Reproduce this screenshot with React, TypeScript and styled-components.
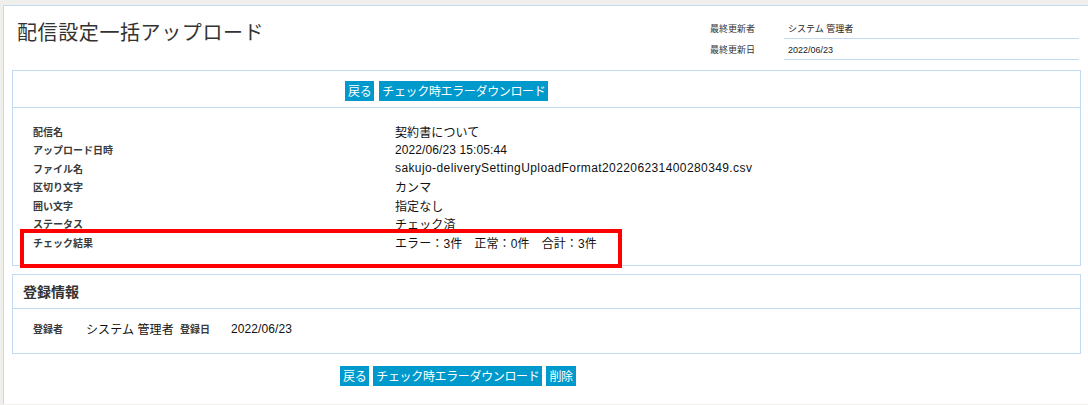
import React from "react";
import styled, { createGlobalStyle } from "styled-components";

const GlobalStyle = createGlobalStyle`
  html, body {
    margin: 0;
    padding: 0;
    background: #f0efec;
  }
  body {
    font-family: "Noto Sans CJK JP", "Liberation Sans", sans-serif;
    color: #333;
  }
`;

const BORDER = "#c3dbf2";

const Page = styled.div`
  margin: 5px 0 0 3px;
  background: #ffffff;
  border-top: 1px solid ${BORDER};
  border-left: 1px solid ${BORDER};
  min-height: 399px;
  box-sizing: border-box;
`;

const TopBar = styled.div`
  display: flex;
  justify-content: space-between;
  align-items: flex-start;
  height: 64px;
  padding: 0 9px 0 13px;
`;

const Title = styled.h1`
  margin: 11px 0 0;
  font-size: 20px;
  line-height: 30px;
  font-weight: 400;
  color: #333;
  letter-spacing: 0.6px;
`;

const Meta = styled.div`
  display: grid;
  grid-template-columns: 74px 295px;
  grid-auto-rows: 21px;
  margin-top: 12px;
`;

const MetaLabel = styled.div`
  display: flex;
  align-items: center;
  font-size: 9px;
  line-height: 12px;
  color: #333;
`;

const MetaValue = styled.div`
  display: flex;
  align-items: flex-end;
  padding: 0 0 3px 4px;
  border-bottom: 1px solid ${BORDER};
  font-family: "Liberation Sans", "Noto Sans CJK JP", sans-serif;
  font-size: 9px;
  line-height: 12px;
  color: #222;
`;

const Panel = styled.section<{ $top?: number }>`
  margin: ${(p) => p.$top ?? 0}px 7px 0 8px;
  border: 1px solid ${BORDER};
  background: #fff;
`;

const PanelHeader = styled.div<{ $h: number }>`
  height: ${(p) => p.$h}px;
  border-bottom: 1px solid ${BORDER};
  box-sizing: border-box;
`;

const ButtonRow = styled.div<{ $pad: number; $gap: number; $top: number }>`
  display: flex;
  gap: ${(p) => p.$gap}px;
  padding: ${(p) => p.$top}px 0 0 ${(p) => p.$pad}px;
`;

const Button = styled.button`
  height: 20px;
  padding: 0 3px;
  border: none;
  border-radius: 0;
  background: #0099cc;
  color: #ffffff;
  font-family: "Noto Sans CJK JP", sans-serif;
  font-size: 12px;
  line-height: 20px;
  letter-spacing: -0.35px;
  cursor: pointer;
`;

const Body = styled.div`
  position: relative;
  padding: 14px 0 13px 20px;
`;

const InfoGrid = styled.div`
  display: grid;
  grid-template-columns: 362px 1fr;
  grid-auto-rows: 18.5px;
  align-items: center;
`;

const Label = styled.div<{ $w?: number }>`
  font-size: 10px;
  font-weight: 700;
  color: #3a3a3a;
  ${(p) => (p.$w ? `width: ${p.$w}px; flex: none;` : "")}
`;

const Value = styled.div<{ $w?: number; $spread?: boolean }>`
  font-family: "Liberation Sans", "Noto Sans CJK JP", sans-serif;
  font-size: 12px;
  color: #111;
  white-space: nowrap;
  letter-spacing: ${(p) => (p.$spread ? "0.4px" : "0.1px")};
  ${(p) => (p.$w ? `width: ${p.$w}px; flex: none;` : "")}
`;

const Highlight = styled.div`
  position: absolute;
  left: 7px;
  top: 121px;
  width: 602px;
  height: 39px;
  border: 4px solid #ff0000;
  box-sizing: border-box;
  pointer-events: none;
`;

const SectionTitle = styled.h2`
  margin: 0;
  padding-left: 10px;
  font-size: 14px;
  font-weight: 700;
  line-height: 33px;
  color: #333;
`;

const RegRow = styled.div`
  display: flex;
  align-items: center;
  height: 20px;
  padding: 10px 0 14px 20px;
`;

const Footer = styled.div`
  padding-top: 12px;
`;

const rows: { label: string; value: string; spread?: boolean }[] = [
  { label: "配信名", value: "契約書について" },
  { label: "アップロード日時", value: "2022/06/23 15:05:44" },
  {
    label: "ファイル名",
    value: "sakujo-deliverySettingUploadFormat202206231400280349.csv",
    spread: true,
  },
  { label: "区切り文字", value: "カンマ" },
  { label: "囲い文字", value: "指定なし" },
  { label: "ステータス", value: "チェック済" },
  { label: "チェック結果", value: "エラー：3件　正常：0件　合計：3件" },
];

export default function App() {
  return (
    <>
      <GlobalStyle />
      <Page>
        <TopBar>
          <Title>配信設定一括アップロード</Title>
          <Meta>
            <MetaLabel>最終更新者</MetaLabel>
            <MetaValue>システム 管理者</MetaValue>
            <MetaLabel>最終更新日</MetaLabel>
            <MetaValue>2022/06/23</MetaValue>
          </Meta>
        </TopBar>

        <Panel>
          <PanelHeader $h={37}>
            <ButtonRow $pad={332} $gap={5} $top={10}>
              <Button>戻る</Button>
              <Button>チェック時エラーダウンロード</Button>
            </ButtonRow>
          </PanelHeader>
          <Body>
            <InfoGrid>
              {rows.map((r) => (
                <React.Fragment key={r.label}>
                  <Label>{r.label}</Label>
                  <Value $spread={r.spread}>{r.value}</Value>
                </React.Fragment>
              ))}
            </InfoGrid>
            <Highlight />
          </Body>
        </Panel>

        <Panel $top={8}>
          <PanelHeader $h={34}>
            <SectionTitle>登録情報</SectionTitle>
          </PanelHeader>
          <RegRow>
            <Label $w={53}>登録者</Label>
            <Value $w={94}>システム 管理者</Value>
            <Label $w={51}>登録日</Label>
            <Value>2022/06/23</Value>
          </RegRow>
        </Panel>

        <Footer>
          <ButtonRow $pad={336} $gap={4} $top={0}>
            <Button>戻る</Button>
            <Button>チェック時エラーダウンロード</Button>
            <Button>削除</Button>
          </ButtonRow>
        </Footer>
      </Page>
    </>
  );
}
